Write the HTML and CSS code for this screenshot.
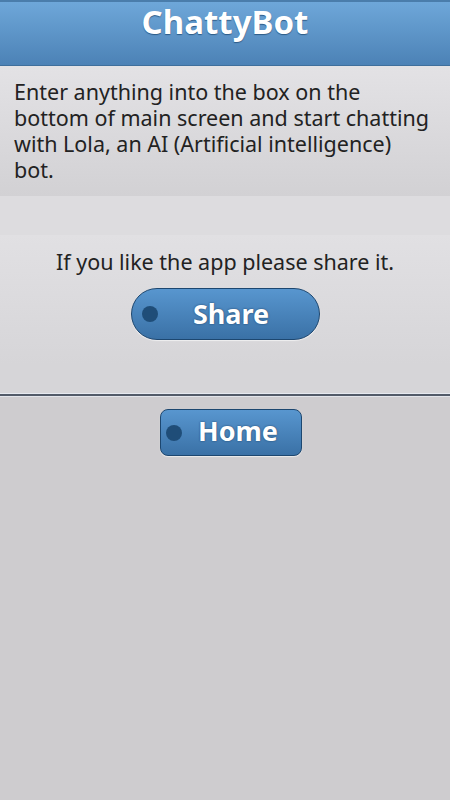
FILE: index.html
```html
<!DOCTYPE html>
<html>
<head>
    <meta charset="UTF-8">
    <title>ChattyBot</title>
    <link rel="stylesheet" href="styles.css">
</head>
<body>
<div id="page">
    <div class="header"><h1>ChattyBot</h1></div>
    <div class="intro">
        <p>Enter anything into the box on the bottom of main screen and start chatting with Lola, an AI (Artificial intelligence) bot.</p>
    </div>
    <div class="spacer"></div>
    <div class="share-box">
        <p>If you like the app please share it.</p>
        <a class="btn btn-share" href="#"><span class="dot"></span><span class="label">Share</span></a>
    </div>
    <div class="spacer small"></div>
    <div class="rule"></div>
    <div class="home-row">
        <a class="btn btn-home" href="#"><span class="dot"></span><span class="label">Home</span></a>
    </div>
</div>
</body>
</html>
```

FILE: styles.css
```css
*{ margin:0; padding:0; font-family:"Noto Sans","Open Sans",sans-serif;}
html,body{ height:100%;}
body{ background:#cecccf;}
a{ text-decoration:none;}

#page{
    width:450px;
    min-height:800px;
    background:#cecccf;
}
.header{
    height:63px;
    border-top:2px solid #4a7dab;
    border-bottom:1px solid #3f6f9c;
    background:linear-gradient(#6ea7d9,#4c82b6);
    text-align:center;
}
.header h1{
    color:#fff;
    font-size:33px;
    font-weight:bold;
    line-height:40px;
    text-shadow:0 1px 1px #2c5a86;
}
.intro{
    height:130px;
    padding:13px 0 0 14px;
    box-sizing:border-box;
    background:linear-gradient(#e3e2e5,#d2d1d4);
}
.intro p{
    width:421px;
    color:#222;
    font-size:21.5px;
    line-height:26px;
}
.spacer{
    height:39px;
    background:#dddcdf;
}
.spacer.small{
    height:28px;
    background:#d6d5d8;
}
.share-box{
    height:130px;
    padding-top:14px;
    box-sizing:border-box;
    background:linear-gradient(#e1e0e3,#d6d5d8);
    text-align:center;
}
.share-box p{
    color:#222;
    font-size:21.5px;
    line-height:26px;
}
.rule{
    height:2px;
    border-top:1px solid #e6e9f0;
    border-bottom:1px solid #e2e4ea;
    background:#525a68;
}
.home-row{
    padding-top:12px;
    text-align:center;
}
.btn{
    display:inline-flex;
    align-items:center;
    position:relative;
    box-sizing:border-box;
    border:1px solid #1d4770;
    background:linear-gradient(#5896cf,#3a71a6);
    color:#fff;
    font-weight:bold;
    text-shadow:0 0 2px #1c3f63;
    box-shadow:0 1px 1px rgba(255,255,255,.6);
}
.btn .dot{
    width:16px;
    height:16px;
    border-radius:50%;
    background:#1f4d78;
}
.btn .label{
    flex:1;
    text-align:center;
    font-size:27px;
    line-height:30px;
}
.btn-share{
    width:189px;
    height:52px;
    margin-top:13px;
    padding:0 14px 0 10px;
    border-radius:26px;
}
.btn-home{
    width:142px;
    height:47px;
    margin-left:11px;
    padding:0 6px 0 5px;
    border-radius:8px;
}
.btn-home .label{
    padding-bottom:3px;
}
```
